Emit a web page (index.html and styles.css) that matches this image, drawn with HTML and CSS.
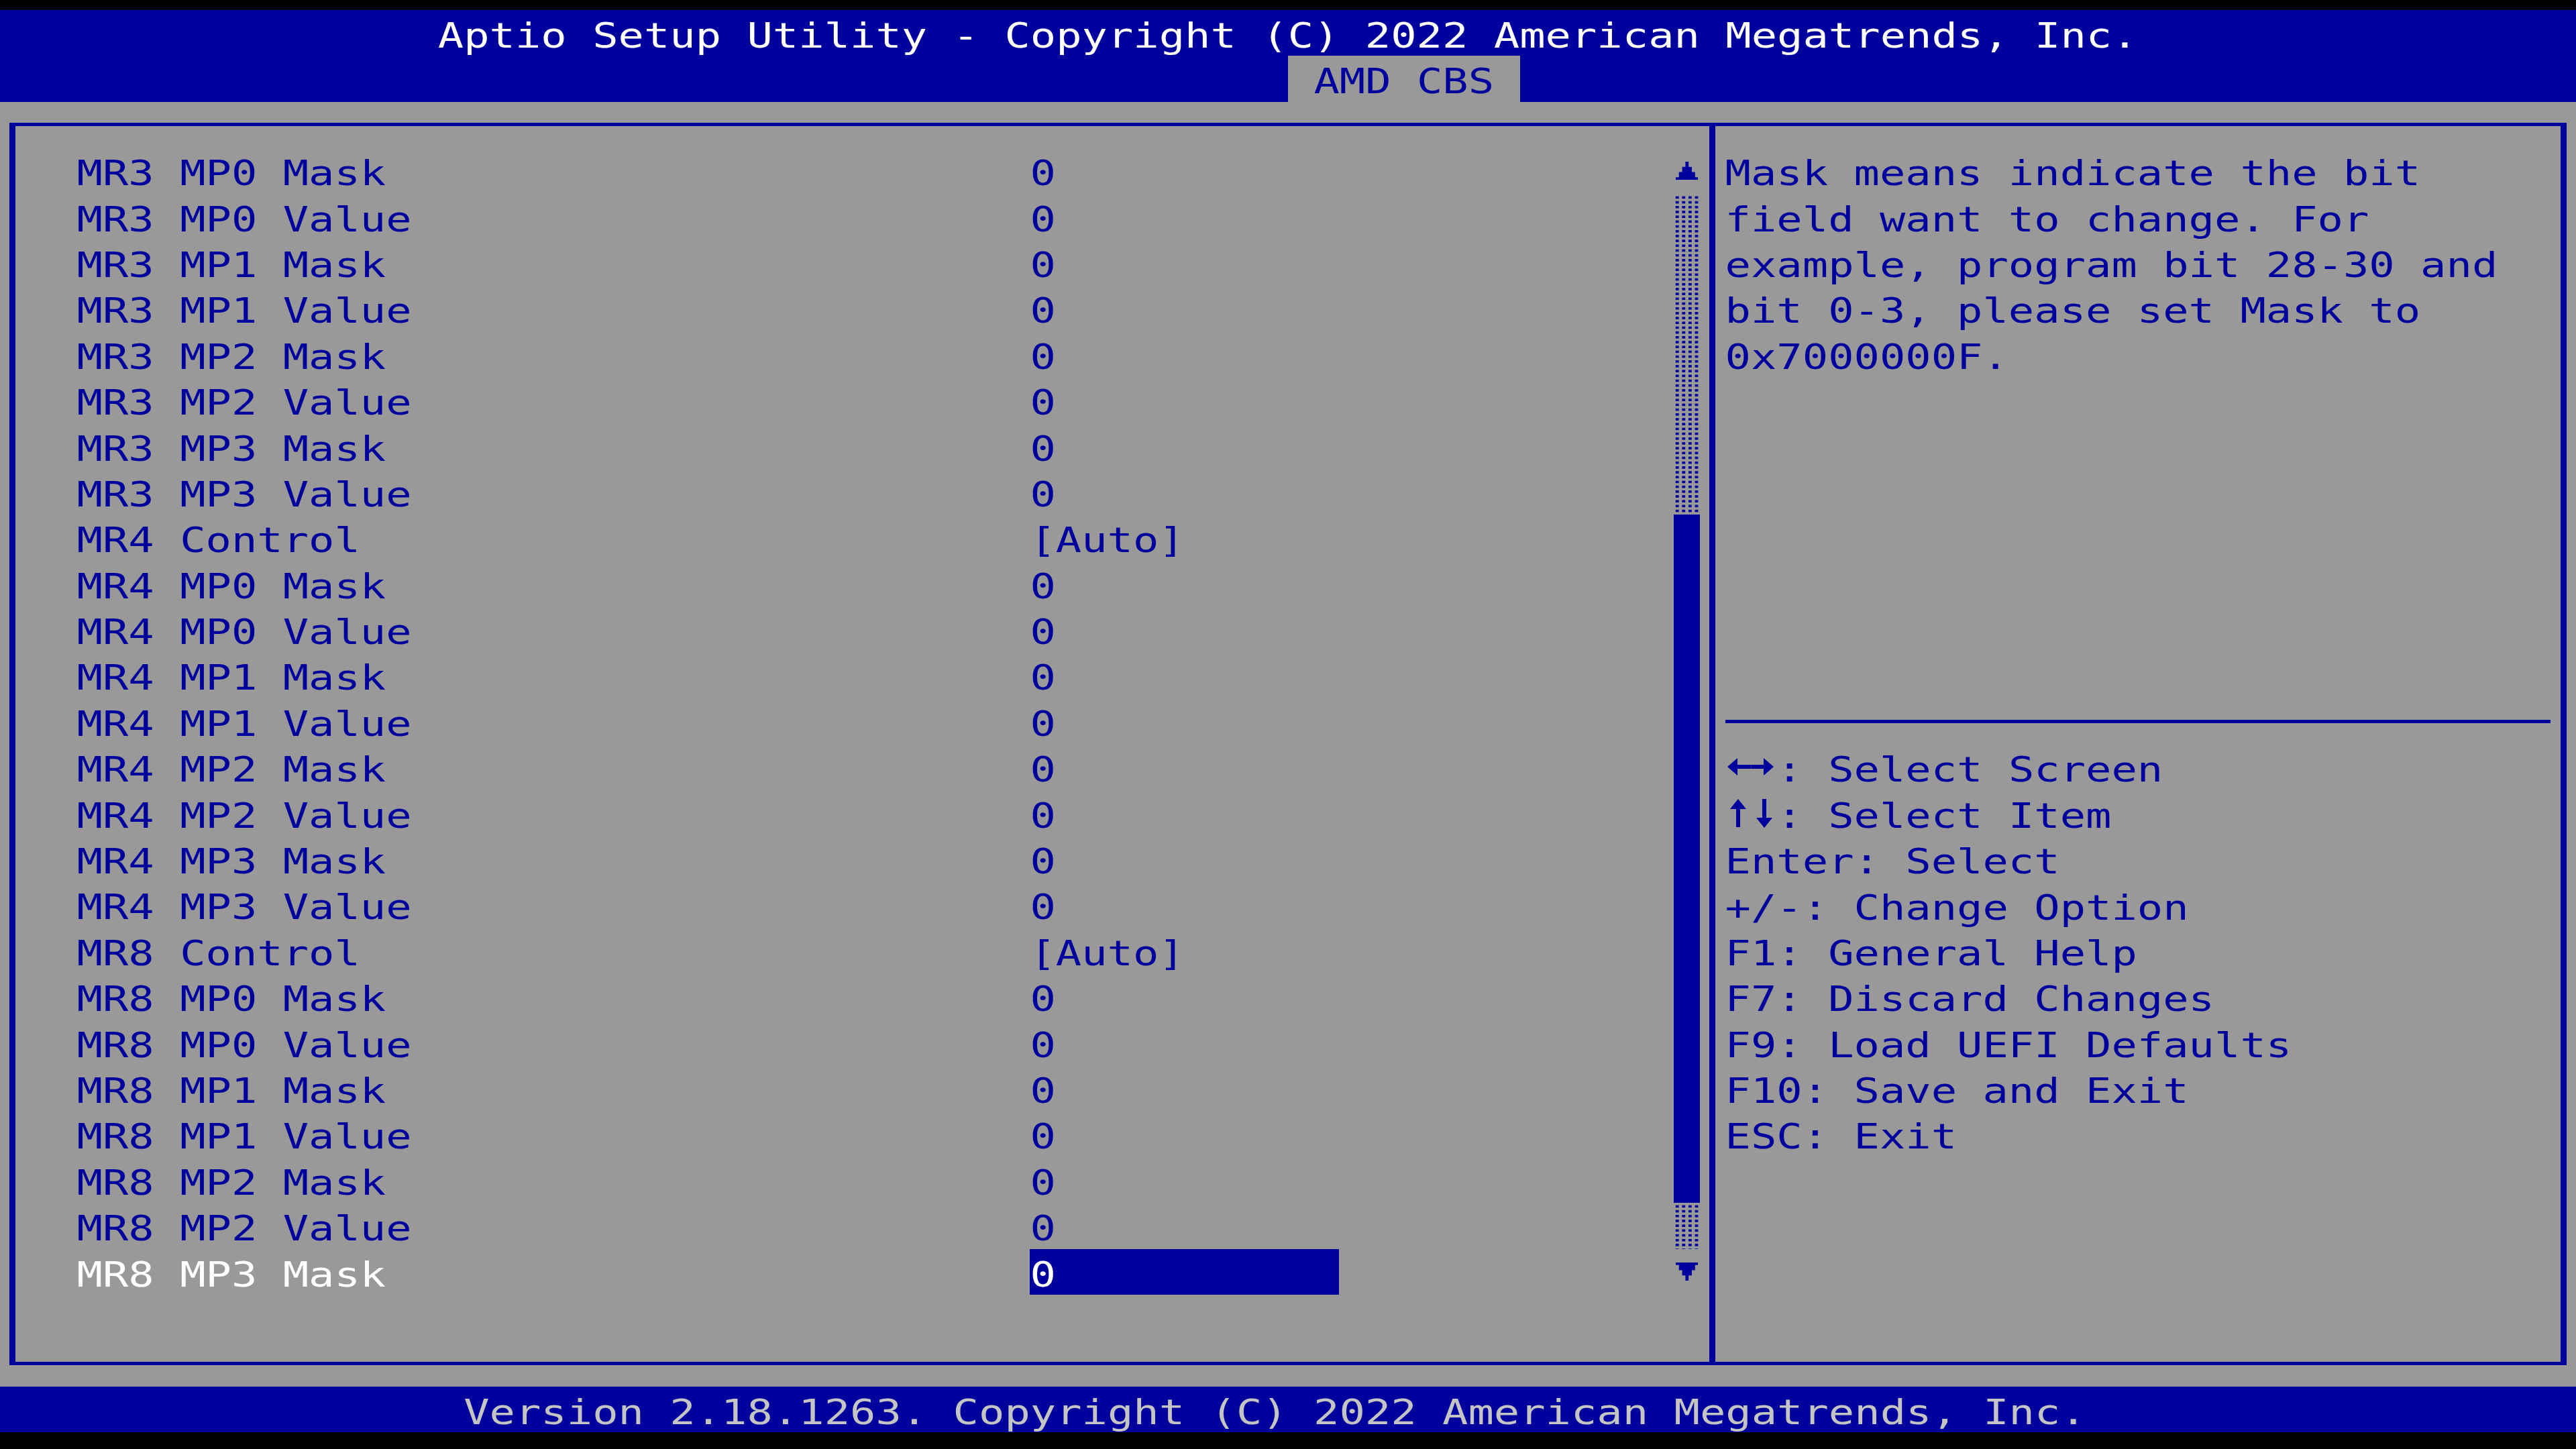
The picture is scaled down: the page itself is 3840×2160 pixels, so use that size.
FILE: index.html
```html
<!DOCTYPE html>
<html lang="en">
<head>
<meta charset="utf-8">
<title>Aptio Setup Utility</title>
<link rel="stylesheet" href="styles.css">
</head>
<body>
<div class="screen">
  <header class="top">
    <div class="title"><span class="tx">Aptio Setup Utility - Copyright (C) 2022 American Megatrends, Inc.</span></div>
    <nav class="tabs"><div class="tab"><span class="tx">AMD CBS</span></div></nav>
  </header>

  <main class="desk">
    <div class="frame">
      <section class="pane-main">
        <ul class="items">
          <li class="item"><span class="label tx">MR3 MP0 Mask</span><span class="value"><span class="tx">0</span></span></li>
          <li class="item"><span class="label tx">MR3 MP0 Value</span><span class="value"><span class="tx">0</span></span></li>
          <li class="item"><span class="label tx">MR3 MP1 Mask</span><span class="value"><span class="tx">0</span></span></li>
          <li class="item"><span class="label tx">MR3 MP1 Value</span><span class="value"><span class="tx">0</span></span></li>
          <li class="item"><span class="label tx">MR3 MP2 Mask</span><span class="value"><span class="tx">0</span></span></li>
          <li class="item"><span class="label tx">MR3 MP2 Value</span><span class="value"><span class="tx">0</span></span></li>
          <li class="item"><span class="label tx">MR3 MP3 Mask</span><span class="value"><span class="tx">0</span></span></li>
          <li class="item"><span class="label tx">MR3 MP3 Value</span><span class="value"><span class="tx">0</span></span></li>
          <li class="item"><span class="label tx">MR4 Control</span><span class="value"><span class="tx">[Auto]</span></span></li>
          <li class="item"><span class="label tx">MR4 MP0 Mask</span><span class="value"><span class="tx">0</span></span></li>
          <li class="item"><span class="label tx">MR4 MP0 Value</span><span class="value"><span class="tx">0</span></span></li>
          <li class="item"><span class="label tx">MR4 MP1 Mask</span><span class="value"><span class="tx">0</span></span></li>
          <li class="item"><span class="label tx">MR4 MP1 Value</span><span class="value"><span class="tx">0</span></span></li>
          <li class="item"><span class="label tx">MR4 MP2 Mask</span><span class="value"><span class="tx">0</span></span></li>
          <li class="item"><span class="label tx">MR4 MP2 Value</span><span class="value"><span class="tx">0</span></span></li>
          <li class="item"><span class="label tx">MR4 MP3 Mask</span><span class="value"><span class="tx">0</span></span></li>
          <li class="item"><span class="label tx">MR4 MP3 Value</span><span class="value"><span class="tx">0</span></span></li>
          <li class="item"><span class="label tx">MR8 Control</span><span class="value"><span class="tx">[Auto]</span></span></li>
          <li class="item"><span class="label tx">MR8 MP0 Mask</span><span class="value"><span class="tx">0</span></span></li>
          <li class="item"><span class="label tx">MR8 MP0 Value</span><span class="value"><span class="tx">0</span></span></li>
          <li class="item"><span class="label tx">MR8 MP1 Mask</span><span class="value"><span class="tx">0</span></span></li>
          <li class="item"><span class="label tx">MR8 MP1 Value</span><span class="value"><span class="tx">0</span></span></li>
          <li class="item"><span class="label tx">MR8 MP2 Mask</span><span class="value"><span class="tx">0</span></span></li>
          <li class="item"><span class="label tx">MR8 MP2 Value</span><span class="value"><span class="tx">0</span></span></li>
          <li class="item sel"><span class="label tx">MR8 MP3 Mask</span><span class="value"><span class="tx">0</span></span></li>
        </ul>

        <div class="scroll">
          <div class="cap">
            <svg class="arrow" viewBox="0 0 7 7" preserveAspectRatio="none"><polygon points="3,0 4,0 4,2 5,2 5,4 6,4 6,6 7,6 7,7 0,7 0,6 1,6 1,4 2,4 2,2 3,2"/></svg>
          </div>
          <div class="shade"></div>
          <div class="thumb"></div>
          <div class="shade"></div>
          <div class="cap">
            <svg class="arrow" viewBox="0 0 7 7" preserveAspectRatio="none"><polygon points="0,0 7,0 7,1 6,1 6,3 5,3 5,5 4,5 4,7 3,7 3,5 2,5 2,3 1,3 1,1 0,1"/></svg>
          </div>
        </div>
      </section>

      <aside class="pane-help">
        <div class="help">
          <div class="tx">Mask means indicate the bit</div>
          <div class="tx">field want to change. For</div>
          <div class="tx">example, program bit 28-30 and</div>
          <div class="tx">bit 0-3, please set Mask to</div>
          <div class="tx">0x7000000F.</div>
        </div>
        <div class="rule"></div>
        <div class="keys">
          <div class="key">
            <svg class="key-ico" viewBox="0 0 76.8 68.4" aria-label="left and right arrows">
              <polygon points="3,34 18,21 18,31 38.4,31 38.4,37 18,37 18,47"/>
              <polygon points="38.4,31 57,31 57,21 72,34 57,47 57,37 38.4,37"/>
            </svg><span class="tx">: Select Screen</span>
          </div>
          <div class="key">
            <svg class="key-ico" viewBox="0 0 76.8 68.4" aria-label="up and down arrows">
              <polygon points="19,13 31,28 22,28 22,55 16,55 16,28 7,28"/>
              <polygon points="55,13 61,13 61,41 70,41 58,56 46,41 55,41"/>
            </svg><span class="tx">: Select Item</span>
          </div>
          <div class="tx">Enter: Select</div>
          <div class="tx">+/-: Change Option</div>
          <div class="tx">F1: General Help</div>
          <div class="tx">F7: Discard Changes</div>
          <div class="tx">F9: Load UEFI Defaults</div>
          <div class="tx">F10: Save and Exit</div>
          <div class="tx">ESC: Exit</div>
        </div>
      </aside>
    </div>
  </main>

  <footer class="foot"><span class="tx">Version 2.18.1263. Copyright (C) 2022 American Megatrends, Inc.</span></footer>
</div>
</body>
</html>
```

FILE: styles.css
```css
/* Text-mode setup screen: 100 x 31 character cells */
:root {
  --cw: 38.4px;          /* one character column */
  --rh: 68.4px;          /* one character row */
  --blue: #00009c;
  --gray: #999999;
  --line: 5px;           /* horizontal box-drawing stroke */
  --vline: 9.6px;        /* vertical box-drawing stroke */
}

html,
body {
  margin: 0;
  background: #000;
}

body {
  width: 3840px;
  height: 2160px;
  overflow: hidden;
}

.screen {
  padding-top: 15px;
  font-family: "DejaVu Sans Mono", "Liberation Mono", monospace;
  font-size: 63.78px;
  line-height: var(--rh);
  color: var(--blue);
}

/* glyphs are squat and wide in this video mode */
.tx {
  display: block;
  height: var(--rh);
  white-space: pre;
  transform: translateY(4.4px) scaleY(0.8);
}

span.tx {
  display: inline-block;
  vertical-align: top;
}

/* ---- title bar ---- */
.top {
  background: var(--blue);
}

.title {
  height: var(--rh);
  padding-left: calc(17 * var(--cw));
  color: #ffffff;
}

.tabs {
  display: flex;
  height: var(--rh);
  padding-left: calc(50 * var(--cw));
}

.tab {
  background: var(--gray);
  padding: 0 var(--cw);
  color: var(--blue);
}

/* ---- main area ---- */
.desk {
  box-sizing: border-box;
  height: calc(28 * var(--rh));
  padding: 31.7px 14.4px;
  background: var(--gray);
}

.frame {
  box-sizing: border-box;
  height: 100%;
  display: flex;
  border: solid var(--blue);
  border-width: var(--line) var(--vline);
}

.pane-main {
  box-sizing: border-box;
  width: 2524.8px;
  display: flex;
  align-items: flex-start;
  padding: 31.7px 14.4px 0 calc(2 * var(--cw) + 14.4px);
}

.items {
  list-style: none;
  margin: 0;
  padding: 0;
  width: calc(62 * var(--cw));
}

.item {
  display: grid;
  grid-template-columns: calc(37 * var(--cw)) calc(12 * var(--cw));
  height: var(--rh);
}

.value {
  height: var(--rh);
}

.item.sel .label {
  color: #ffffff;
}

.item.sel .value {
  background: var(--blue);
  color: #ffffff;
}

/* ---- scroll bar ---- */
.scroll {
  width: var(--cw);
  display: grid;
  grid-template-rows: var(--rh) calc(7 * var(--rh)) calc(15 * var(--rh)) var(--rh) var(--rh);
}

.cap {
  display: flex;
  align-items: center;
  justify-content: center;
}

.arrow {
  width: 33.6px;
  height: 27px;
  fill: var(--blue);
}

.shade {
  margin: 0 2px 0 -2px;
  background-image: conic-gradient(from 90deg at 4.8px 3.6px, var(--blue) 25%, transparent 0);
  background-size: 9.6px 7.2px;
}

.thumb {
  background: var(--blue);
}

/* ---- help column ---- */
.pane-help {
  flex: 1;
  box-sizing: border-box;
  border-left: var(--vline) solid var(--blue);
  padding: 31.7px 14.4px 0;
}

.help {
  height: calc(12 * var(--rh));
}

.rule {
  height: var(--rh);
  display: flex;
  align-items: center;
}

.rule::before {
  content: "";
  flex: 1;
  height: var(--line);
  background: var(--blue);
}

.key {
  display: flex;
  height: var(--rh);
}

/* two-cell arrow key symbol */
.key-ico {
  flex: none;
  width: calc(2 * var(--cw));
  height: var(--rh);
  fill: var(--blue);
}

/* ---- status bar ---- */
.foot {
  height: var(--rh);
  padding-left: calc(18 * var(--cw));
  background: var(--blue);
  color: #c4c4c4;
}
```
